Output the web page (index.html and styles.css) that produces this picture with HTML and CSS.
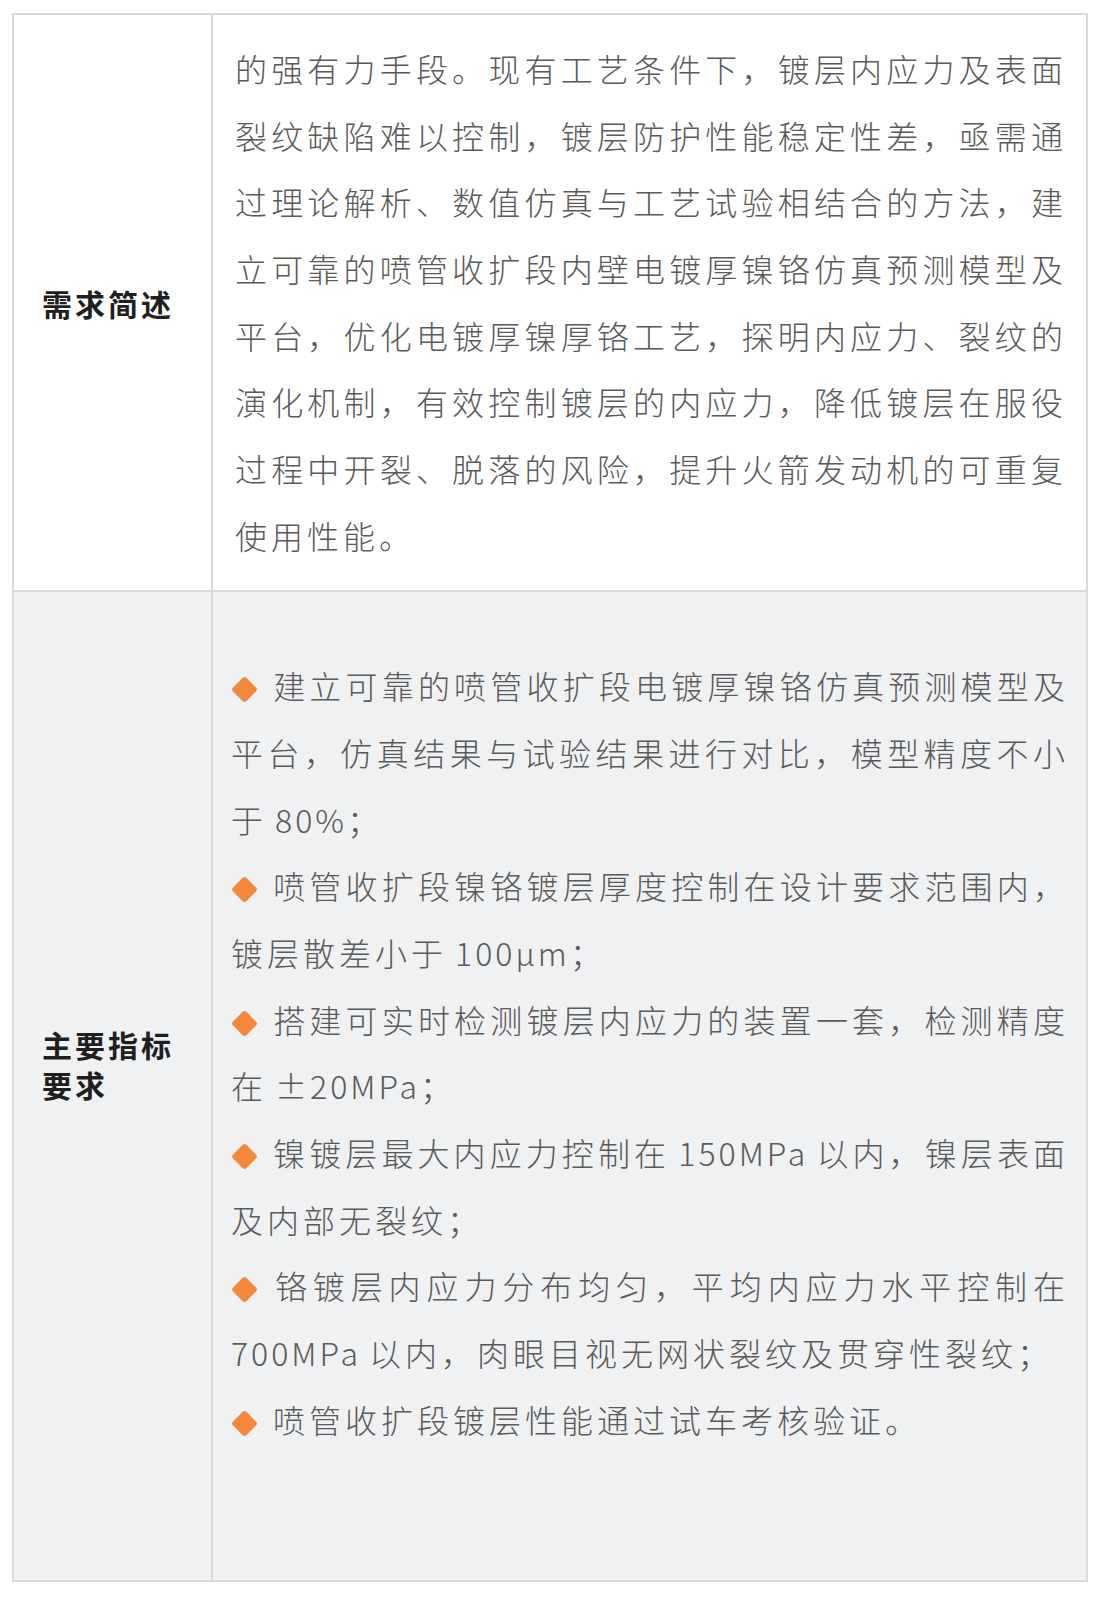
FILE: index.html
```html
<!DOCTYPE html>
<html lang="zh-CN">
<head>
<meta charset="utf-8">
<title>需求简述</title>
<link rel="stylesheet" href="styles.css">
</head>
<body>
<div class="spec">
  <div class="label">需求简述</div>
  <div class="content content-desc">
    <p>的强有力手段。现有工艺条件下，镀层内应力及表面裂纹缺陷难以控制，镀层防护性能稳定性差，亟需通过理论解析、数值仿真与工艺试验相结合的方法，建立可靠的喷管收扩段内壁电镀厚镍铬仿真预测模型及平台，优化电镀厚镍厚铬工艺，探明内应力、裂纹的演化机制，有效控制镀层的内应力，降低镀层在服役过程中开裂、脱落的风险，提升火箭发动机的可重复使用性能。</p>
  </div>
  <div class="label label-alt row-alt">主要指标要求</div>
  <div class="content content-list row-alt">
    <p><svg class="dia" viewBox="0 0 27 27" width="27" height="27"><path d="M11.4 2.1 Q13.5 0 15.6 2.1 L24.9 11.4 Q27 13.5 24.9 15.6 L15.6 24.9 Q13.5 27 11.4 24.9 L2.1 15.6 Q0 13.5 2.1 11.4 Z" fill="#f5883b"/></svg>建立可靠的喷管收扩段电镀厚镍铬仿真预测模型及平台，仿真结果与试验结果进行对比，模型精度不小于 <span class="num">80%</span>；</p>
    <p><svg class="dia" viewBox="0 0 27 27" width="27" height="27"><path d="M11.4 2.1 Q13.5 0 15.6 2.1 L24.9 11.4 Q27 13.5 24.9 15.6 L15.6 24.9 Q13.5 27 11.4 24.9 L2.1 15.6 Q0 13.5 2.1 11.4 Z" fill="#f5883b"/></svg>喷管收扩段镍铬镀层厚度控制在设计要求范围内，镀层散差小于 <span class="num">100μm</span>；</p>
    <p><svg class="dia" viewBox="0 0 27 27" width="27" height="27"><path d="M11.4 2.1 Q13.5 0 15.6 2.1 L24.9 11.4 Q27 13.5 24.9 15.6 L15.6 24.9 Q13.5 27 11.4 24.9 L2.1 15.6 Q0 13.5 2.1 11.4 Z" fill="#f5883b"/></svg>搭建可实时检测镀层内应力的装置一套，检测精度在 <span class="num">±20MPa</span>；</p>
    <p><svg class="dia" viewBox="0 0 27 27" width="27" height="27"><path d="M11.4 2.1 Q13.5 0 15.6 2.1 L24.9 11.4 Q27 13.5 24.9 15.6 L15.6 24.9 Q13.5 27 11.4 24.9 L2.1 15.6 Q0 13.5 2.1 11.4 Z" fill="#f5883b"/></svg>镍镀层最大内应力控制在 <span class="num">150MPa</span> 以内，镍层表面及内部无裂纹；</p>
    <p><svg class="dia" viewBox="0 0 27 27" width="27" height="27"><path d="M11.4 2.1 Q13.5 0 15.6 2.1 L24.9 11.4 Q27 13.5 24.9 15.6 L15.6 24.9 Q13.5 27 11.4 24.9 L2.1 15.6 Q0 13.5 2.1 11.4 Z" fill="#f5883b"/></svg>铬镀层内应力分布均匀，平均内应力水平控制在 <span class="num">700MPa</span> 以内，肉眼目视无网状裂纹及贯穿性裂纹；</p>
    <p><svg class="dia" viewBox="0 0 27 27" width="27" height="27"><path d="M11.4 2.1 Q13.5 0 15.6 2.1 L24.9 11.4 Q27 13.5 24.9 15.6 L15.6 24.9 Q13.5 27 11.4 24.9 L2.1 15.6 Q0 13.5 2.1 11.4 Z" fill="#f5883b"/></svg>喷管收扩段镀层性能通过试车考核验证。</p>
  </div>
</div>
</body>
</html>
```

FILE: styles.css
```css
html, body {
  margin: 0;
  padding: 0;
  background: #ffffff;
}

body {
  font-family: "Noto Sans CJK SC", "Noto Sans", sans-serif;
}

.spec {
  box-sizing: border-box;
  width: 1076px;
  margin: 13px 0 0 12px;
  border: 2px solid #d9d9d9;
  display: grid;
  grid-template-columns: 199px 1fr;
}

.label {
  box-sizing: border-box;
  border-right: 2px solid #d9d9d9;
  padding: 0 20px 0 28px;
  display: flex;
  align-items: center;
  font-size: 30px;
  line-height: 40px;
  font-weight: 700;
  letter-spacing: 3px;
  color: #1f1f1f;
}

.label-alt {
  padding-bottom: 44px;
}

.row-alt {
  background: #f0f1f3;
  border-top: 2px solid #d9d9d9;
}

.content {
  font-size: 32px;
  line-height: 66.67px;
  letter-spacing: 4px;
  word-spacing: -3px;
  color: #5a5a5a;
  font-weight: 300;
  text-align: justify;
}

.content p {
  margin: 0;
}

.num {
  letter-spacing: 3px;
}

.content-desc {
  padding: 20px 19px 22px 22px;
}

.content-list {
  padding: 60px 17px 128px 18px;
}

.dia {
  display: inline-block;
  vertical-align: -4px;
  margin-right: 15px;
}
```
